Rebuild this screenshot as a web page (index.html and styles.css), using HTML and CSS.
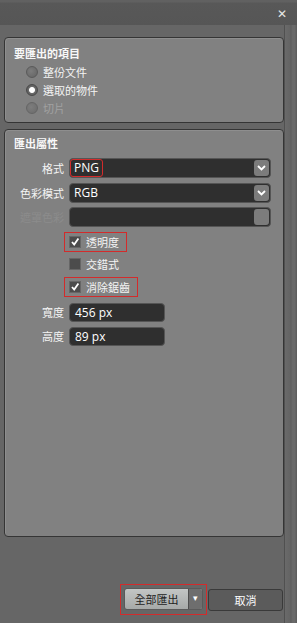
FILE: index.html
```html
<!DOCTYPE html>
<html lang="zh-Hant">
<head>
    <meta charset="UTF-8">
    <title>匯出</title>
    <link rel="stylesheet" href="styles.css">
</head>
<body>
    <div class="titlebar">
        <span class="close">&#x2715;</span>
    </div>
    <div class="body-row">
        <div class="main">
            <div class="panel items">
                <div class="panel-title">要匯出的項目</div>
                <div class="radio-row"><span class="radio"></span>整份文件</div>
                <div class="radio-row"><span class="radio on"></span>選取的物件</div>
                <div class="radio-row disabled"><span class="radio"></span>切片</div>
            </div>

            <div class="panel props">
                <div class="panel-title">匯出屬性</div>
                <div class="field-row">
                    <label>格式</label>
                    <div class="select">
                        <span class="value marked">PNG</span>
                        <span class="arrow"><svg width="9" height="6" viewBox="0 0 9 6"><path d="M1 1 L4.5 4.5 L8 1" fill="none" stroke="#fff" stroke-width="1.8"/></svg></span>
                    </div>
                </div>
                <div class="field-row">
                    <label>色彩模式</label>
                    <div class="select">
                        <span class="value">RGB</span>
                        <span class="arrow"><svg width="9" height="6" viewBox="0 0 9 6"><path d="M1 1 L4.5 4.5 L8 1" fill="none" stroke="#fff" stroke-width="1.8"/></svg></span>
                    </div>
                </div>
                <div class="field-row disabled">
                    <label>遮罩色彩</label>
                    <div class="select"><span class="value"></span><span class="arrow"></span></div>
                </div>

                <div class="check-list">
                    <div class="check-row marked"><span class="check on"><svg width="10" height="10" viewBox="0 0 10 10"><path d="M2 5 L4.2 7.6 L8.4 1.6" fill="none" stroke="#fff" stroke-width="1.8"/></svg></span>透明度</div>
                    <div class="check-row"><span class="check"></span>交錯式</div>
                    <div class="check-row marked"><span class="check on"><svg width="10" height="10" viewBox="0 0 10 10"><path d="M2 5 L4.2 7.6 L8.4 1.6" fill="none" stroke="#fff" stroke-width="1.8"/></svg></span>消除鋸齒</div>
                </div>

                <div class="field-row size">
                    <label>寬度</label>
                    <div class="input">456 px</div>
                </div>
                <div class="field-row size">
                    <label>高度</label>
                    <div class="input">89 px</div>
                </div>
            </div>

            <div class="footer">
                <div class="export-wrap">
                    <div class="btn export"><span class="btn-text">全部匯出</span><span class="drop">&#x25BE;</span></div>
                </div>
                <div class="btn cancel">取消</div>
            </div>
        </div>
        <div class="side-strip"></div>
    </div>
</body>
</html>
```

FILE: styles.css
```css
body {
    margin: 0;
    width: 297px;
    height: 623px;
    overflow: hidden;
    background-color: #666666;
    font-family: "Noto Sans CJK TC", "Liberation Sans", sans-serif;
    font-size: 11px;
    color: #f4f4f4;
}
.titlebar {
    height: 25px;
    background: linear-gradient(#616161 0, #616161 2px, #585858 3px, #565656 100%);
    display: flex;
    justify-content: flex-end;
    align-items: center;
    padding-right: 10px;
}
.close {
    color: #e6e6e6;
    font-size: 12px;
    font-family: "DejaVu Sans", sans-serif;
    margin-top: 3px;
}
.body-row {
    display: flex;
    height: 598px;
}
.main {
    width: 284px;
    display: flex;
    flex-direction: column;
    padding-top: 12px;
    box-sizing: border-box;
}
.side-strip {
    flex: 1;
    background: linear-gradient(90deg, #505050 0, #505050 1px, #6a6a6a 1px, #646464 6px, #5c5c5c 7px, #686868 8px, #6a6a6a 11px, #5e5e5e 12px);
}
.panel {
    margin-left: 4px;
    background-color: #818181;
    border: 1px solid #353535;
    border-radius: 4px;
    box-shadow: inset 1px 1px 0 #8e8e8e;
}
.panel-title {
    font-weight: bold;
    color: #f8f8f8;
    line-height: 14px;
    padding-left: 9px;
}
.items {
    padding-top: 8px;
    box-sizing: border-box;
    height: 86px;
}
.radio-row {
    display: flex;
    align-items: center;
    height: 18px;
    padding-left: 21px;
}
.items .panel-title {
    margin-bottom: 3px;
}
.radio {
    width: 10px;
    height: 10px;
    border-radius: 50%;
    background: radial-gradient(circle at 40% 40%, #7c7c7c, #636363);
    border: 1px solid #5a5a5a;
    margin-right: 5px;
}
.radio.on {
    background: radial-gradient(circle, #ffffff 0, #ffffff 2.5px, #6a6a6a 3.5px, #505050 100%);
    border-color: #4a4a4a;
}
.radio-row.disabled {
    color: #a2a2a2;
}
.radio-row.disabled .radio {
    opacity: 0.7;
}
.props {
    margin-top: 6px;
    height: 408px;
    padding-top: 6px;
    box-sizing: border-box;
}
.props .panel-title {
    margin-bottom: 8px;
}
.field-row {
    display: flex;
    align-items: center;
    height: 20px;
    margin-bottom: 4.5px;
}
.field-row label {
    width: 59px;
    text-align: right;
    margin-right: 5px;
    color: #f4f4f4;
}
.select {
    width: 202px;
    height: 20px;
    box-sizing: border-box;
    background-color: #2f2f2f;
    border: 1px solid #555555;
    border-radius: 4px;
    display: flex;
    align-items: center;
    justify-content: space-between;
    font-family: "Open Sans", "Liberation Sans", sans-serif;
    font-size: 12px;
    color: #ffffff;
}
.value {
    padding: 0 3px;
    margin-left: 1px;
    line-height: 16px;
}
.value.marked {
    outline: 1px solid #d32b2b;
    border-radius: 2px;
}
.arrow {
    width: 15px;
    height: 16px;
    margin-right: 1px;
    background-color: #7c7c7c;
    border-radius: 3px;
    display: flex;
    align-items: center;
    justify-content: center;
}
.field-row.disabled label {
    color: #8c8c8c;
}
.check-list {
    margin-top: 3px;
    margin-left: 59px;
    margin-bottom: 6px;
}
.check-row {
    display: flex;
    align-items: center;
    width: max-content;
    height: 18px;
    padding: 0 7px 0 4px;
    margin-bottom: 2.5px;
    border: 1px solid transparent;
}
.check-row.marked {
    border-color: #d32b2b;
}
.check {
    width: 10px;
    height: 10px;
    background-color: #4c4c4c;
    border: 1px solid #666666;
    margin-right: 5px;
    display: flex;
    align-items: center;
    justify-content: center;
}
.size {
    height: 19px;
    margin-bottom: 5px;
}
.input {
    width: 96px;
    height: 19px;
    box-sizing: border-box;
    background-color: #2f2f2f;
    border: 1px solid #555555;
    border-radius: 4px;
    padding-left: 5px;
    font-family: "Open Sans", "Liberation Sans", sans-serif;
    font-size: 12px;
    line-height: 17px;
    color: #ffffff;
}
.footer {
    display: flex;
    justify-content: flex-end;
    align-items: center;
    margin-top: 47px;
    padding-right: 1px;
}
.export-wrap {
    border: 1px solid #d32b2b;
    padding: 3px 3px 4px 3px;
    margin-right: 1px;
}
.btn {
    height: 22px;
    box-sizing: border-box;
    border-radius: 3px;
    display: flex;
    align-items: center;
    justify-content: center;
    font-size: 11px;
}
.export {
    width: 79px;
    background: linear-gradient(#c3c6c5, #a6a9a8);
    border: 1px solid #5a5a5a;
    color: #1e1e1e;
    justify-content: space-between;
    overflow: hidden;
}
.btn-text {
    flex: 1;
    text-align: center;
}
.drop {
    width: 13px;
    height: 100%;
    background-color: #6e6e6e;
    border-left: 1px solid #4e4e4e;
    color: #ffffff;
    font-size: 9px;
    text-align: center;
    line-height: 18px;
}
.cancel {
    width: 75px;
    background-color: #5b5b5b;
    border: 1px solid #3a3a3a;
    color: #ffffff;
}
```
